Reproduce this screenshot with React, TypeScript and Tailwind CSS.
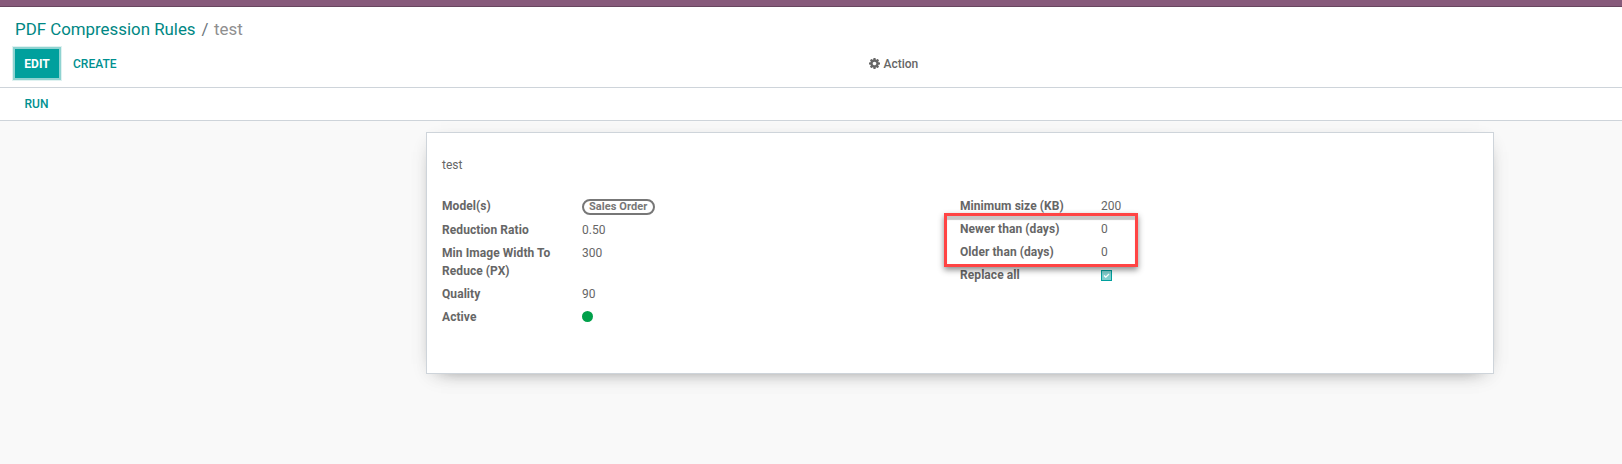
import React from "react";

function Cog() {
  return (
    <svg viewBox="128 128 1536 1536" className="size-[11px]" fill="currentColor">
      <path d="M1152 896q0-106-75-181t-181-75-181 75-75 181 75 181 181 75 181-75 75-181zm512-109v222q0 12-8 23t-20 13l-185 28q-19 54-39 91 35 50 107 138 10 12 10 25t-9 23q-27 37-99 108t-94 71q-12 0-26-9l-138-108q-44 23-91 38-16 136-29 186-7 28-36 28h-222q-14 0-24.5-8.5t-11.5-21.5l-28-184q-49-16-90-37l-141 107q-10 9-25 9-14 0-25-11-126-114-165-168-7-10-7-23 0-12 8-23 15-21 51-66.5t54-70.5q-27-50-41-99l-183-27q-13-2-21-12.5t-8-23.5v-222q0-12 8-23t19-13l186-28q14-46 39-92-40-57-107-138-10-12-10-24 0-10 9-23 26-36 98.5-107.5t94.5-71.5q13 0 26 10l138 107q44-23 91-38 16-136 29-186 7-28 36-28h222q14 0 24.5 8.5t11.5 21.5l28 184q49 16 90 37l142-107q9-9 24-9 13 0 25 10 129 119 165 170 7 8 7 22 0 12-8 23-15 21-51 66.5t-54 70.5q26 50 41 98l183 28q13 2 21 12.5t8 23.5z" />
    </svg>
  );
}

function Row({ label, children, h = "h-[23px]" }: { label: React.ReactNode; children: React.ReactNode; h?: string }) {
  return (
    <div className={`flex ${h}`}>
      <div className="w-[140px] shrink-0 whitespace-pre-line font-bold tracking-[0.07px] text-[#666]">{label}</div>
      <div className="text-[#666]">{children}</div>
    </div>
  );
}

export default function App() {
  return (
    <div className="flex h-[464px] w-full flex-col overflow-hidden bg-[#f9f9f9] font-['Roboto',sans-serif] text-[12px] leading-[18px] text-[#666]">
      <div className="h-[7px] shrink-0 border-b border-[#68465f] bg-[#875a7b]" />
      <header className="flex h-[81px] shrink-0 flex-col border-b border-[#ced4da] bg-white">
        <div className="flex h-[42px] items-center gap-[6px] pl-[15px] pt-[2px] text-[16.87px] leading-[26px] text-[#8f8f8f]">
          <span className="text-[#008784]">PDF Compression Rules</span>
          <span className="text-[#6c757d]">/</span>
          <span className="-ml-[0.5px]">test</span>
        </div>
        <div className="flex h-[29px] items-center">
          <button className="ml-[15px] h-[29px] w-[44px] bg-[#00a09d] font-bold text-white shadow-[0_0_0_2px_#8fd3d1,0_0_0_3px_#dff2f1]">EDIT</button>
          <button className="ml-[14px] font-medium text-[#009090]">CREATE</button>
          <button className="ml-[753px] flex items-center gap-[3px] font-medium">
            <Cog />
            Action
          </button>
        </div>
      </header>
      <div className="flex h-[33px] shrink-0 items-center border-b border-[#ced4da] bg-white pl-[24.5px]">
        <button className="font-medium text-[#009090]">RUN</button>
      </div>
      <main className="relative ml-[426px] mt-[11px] h-[242px] w-[1068px] shrink-0 border border-[#ced4da] bg-white px-[15px] pt-[23px] shadow-[0_5px_20px_-15px_rgba(0,0,0,0.8),0_6px_20px_-6px_rgba(0,0,0,0.13)]">
        <div>test</div>
        <div className="mt-[23px] flex">
          <div className="w-[518px]">
            <Row label="Model(s)" h="h-[24px]">
              <div className="mt-[2px] h-[16px] w-[73px] whitespace-nowrap rounded-full border-2 border-[#777] px-[5px] text-[11px] font-bold leading-[12px] tracking-[0.07px] text-[#777]">
                Sales Order
              </div>
            </Row>
            <Row label="Reduction Ratio">0.50</Row>
            <Row label={"Min Image Width To\nReduce (PX)"} h="h-[41px]">300</Row>
            <Row label="Quality">90</Row>
            <Row label="Active">
              <div className="mt-[3px] size-[11px] rounded-full bg-[#00a04a]" />
            </Row>
          </div>
          <div className="[&>div>div:last-child]:pl-[1px]">
            <Row label="Minimum size (KB)">200</Row>
            <Row label="Newer than (days)">0</Row>
            <Row label="Older than (days)">0</Row>
            <Row label="Replace all">
              <div className="mt-[4px] flex size-[11px] items-center justify-center border border-[#00a09d] bg-[#80cfce]">
                <svg viewBox="0 0 9 9" className="size-[9px]" fill="none" stroke="#fff" strokeWidth="1.3">
                  <path d="M2 4.5 3.8 6.2 7 3" />
                </svg>
              </div>
            </Row>
          </div>
        </div>
        <div className="absolute left-[517px] top-[80px] h-[54px] w-[194px] border-[3px] border-[#ff4444] shadow-[0_3px_6px_rgba(0,0,0,0.45),inset_0_4px_1px_rgba(0,0,0,0.22)]" />
      </main>
    </div>
  );
}
